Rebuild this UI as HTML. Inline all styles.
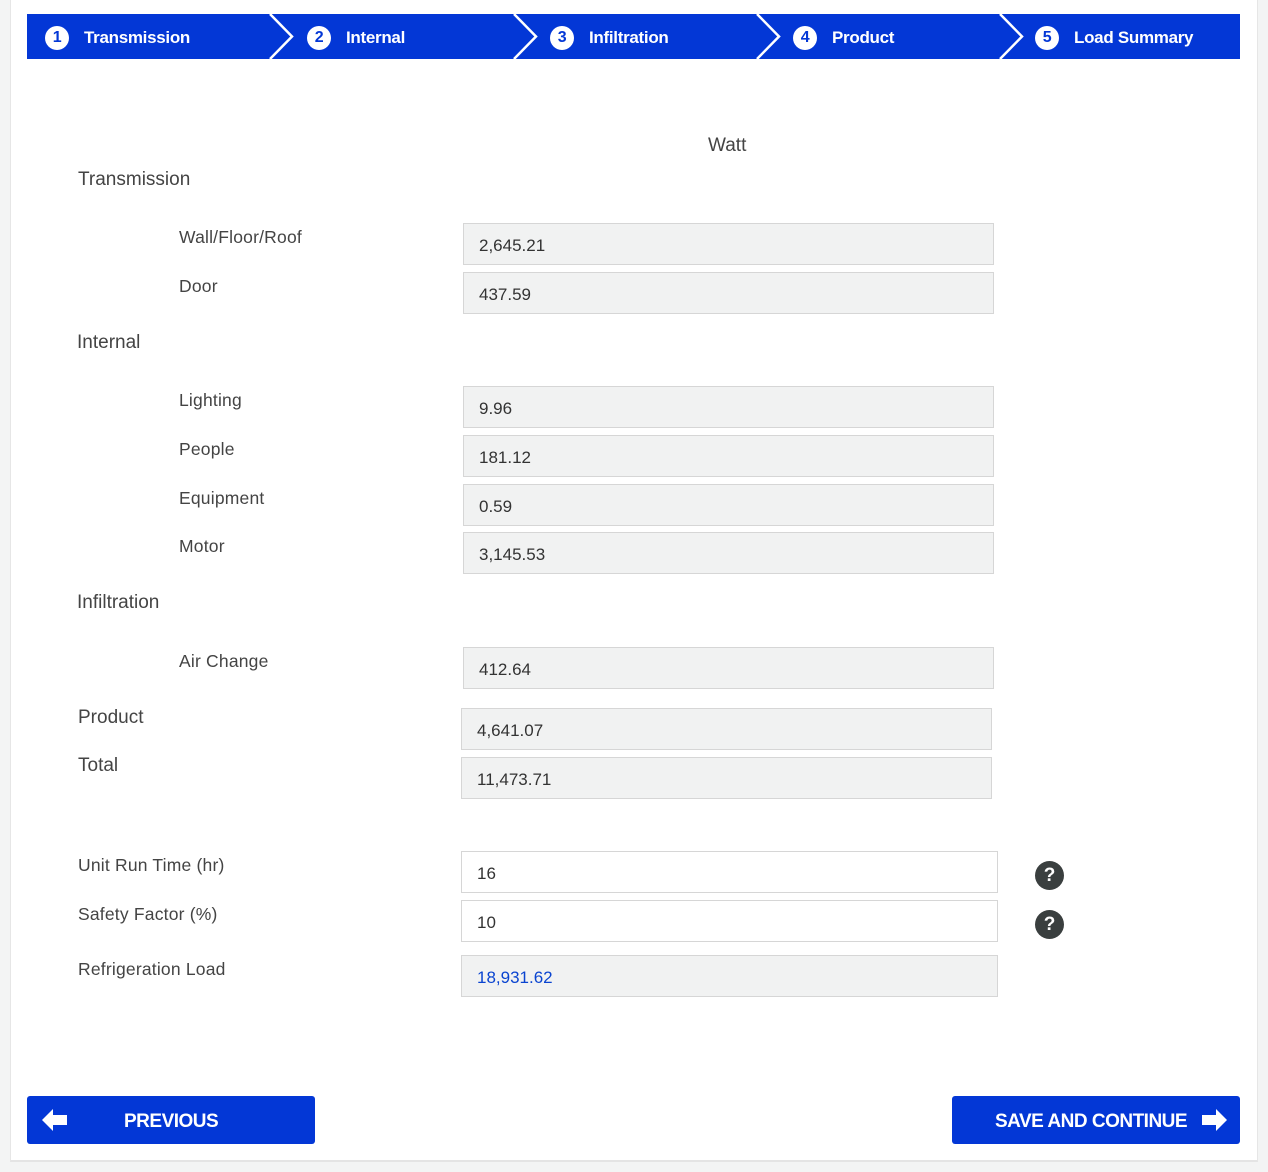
<!DOCTYPE html>
<html><head><style>
*{margin:0;padding:0;box-sizing:border-box}
body{width:1268px;height:1172px;background:#f3f4f4;font-family:"Liberation Sans",sans-serif;position:relative;overflow:hidden;color:#444}
.card{position:absolute;left:10px;top:0;width:1248px;height:1162px;background:#fff;border-left:1px solid #e6e6e6;border-right:1px solid #e6e6e6;border-bottom:2px solid #e4e4e4}
.bar{position:absolute;left:27px;top:14px;width:1213px;height:45px;background:#0337d6}
.step{position:absolute;top:15px;height:45px;line-height:45px;color:#fff;font-size:17px;font-weight:bold;letter-spacing:-0.3px}
.num{display:inline-block;width:24px;height:24px;border-radius:50%;background:#fff;color:#0337d6;text-align:center;line-height:24px;font-size:16px;margin-right:15px;vertical-align:1px}
.l{position:absolute;font-size:19px;color:#444}
.s{font-size:17.5px;letter-spacing:0.2px}
.f{position:absolute;height:42px;background:#f1f2f2;border:1px solid #d6d6d6;font-size:17px;line-height:44px;padding-left:15px;color:#333}
.w{background:#fff}
.q{position:absolute;width:29px;height:29px;border-radius:50%;background:#3a3f3f;color:#fff;font-weight:bold;text-align:center;line-height:29px;font-size:19px}
.btn{position:absolute;top:1096px;height:48px;background:#0337d6;border-radius:3px;color:#fff;font-weight:bold;font-size:19px;line-height:52px;letter-spacing:-0.5px}
</style></head><body>
<div class="card"></div>
<div class="bar"></div>
<svg style="position:absolute;left:0;top:14px" width="1268" height="45">
<g fill="none" stroke="#fff" stroke-width="2.5">
<polyline points="270,0 292,22.5 270,45"/>
<polyline points="514,0 536,22.5 514,45"/>
<polyline points="757,0 779,22.5 757,45"/>
<polyline points="1000,0 1022,22.5 1000,45"/>
</g></svg>
<div class="step" style="left:45px"><span class="num">1</span>Transmission</div>
<div class="step" style="left:307px"><span class="num">2</span>Internal</div>
<div class="step" style="left:550px"><span class="num">3</span>Infiltration</div>
<div class="step" style="left:793px"><span class="num">4</span>Product</div>
<div class="step" style="left:1035px"><span class="num">5</span>Load Summary</div>

<div class="l" style="left:708px;top:135px">Watt</div>
<div class="l" style="left:78px;top:169px">Transmission</div>
<div class="l s" style="left:179px;top:227px">Wall/Floor/Roof</div>
<div class="l s" style="left:179px;top:276px">Door</div>
<div class="l" style="left:77px;top:332px">Internal</div>
<div class="l s" style="left:179px;top:390px">Lighting</div>
<div class="l s" style="left:179px;top:439px">People</div>
<div class="l s" style="left:179px;top:488px">Equipment</div>
<div class="l s" style="left:179px;top:536px">Motor</div>
<div class="l" style="left:77px;top:592px">Infiltration</div>
<div class="l s" style="left:179px;top:651px">Air Change</div>
<div class="l" style="left:78px;top:707px">Product</div>
<div class="l" style="left:78px;top:755px">Total</div>
<div class="l s" style="left:78px;top:855px">Unit Run Time (hr)</div>
<div class="l s" style="left:78px;top:904px">Safety Factor (%)</div>
<div class="l s" style="left:78px;top:959px">Refrigeration Load</div>

<div class="f" style="left:463px;top:223px;width:531px">2,645.21</div>
<div class="f" style="left:463px;top:272px;width:531px">437.59</div>
<div class="f" style="left:463px;top:386px;width:531px">9.96</div>
<div class="f" style="left:463px;top:435px;width:531px">181.12</div>
<div class="f" style="left:463px;top:484px;width:531px">0.59</div>
<div class="f" style="left:463px;top:532px;width:531px">3,145.53</div>
<div class="f" style="left:463px;top:647px;width:531px">412.64</div>
<div class="f" style="left:461px;top:708px;width:531px">4,641.07</div>
<div class="f" style="left:461px;top:757px;width:531px">11,473.71</div>
<div class="f w" style="left:461px;top:851px;width:537px">16</div>
<div class="f w" style="left:461px;top:900px;width:537px">10</div>
<div class="f" style="left:461px;top:955px;width:537px;color:#0a44d0">18,931.62</div>
<div class="q" style="left:1035px;top:861px">?</div>
<div class="q" style="left:1035px;top:910px">?</div>

<div class="btn" style="left:27px;width:288px">
<svg style="position:absolute;left:15px;top:13px" width="26" height="22"><polygon points="0,11 11,0 11,6 25,6 25,16 11,16 11,22" fill="#fff"/></svg>
<span style="position:absolute;left:97px">PREVIOUS</span></div>
<div class="btn" style="left:952px;width:288px">
<span style="position:absolute;left:43px">SAVE AND CONTINUE</span>
<svg style="position:absolute;left:250px;top:13px" width="26" height="22"><polygon points="25,11 14,0 14,6 0,6 0,16 14,16 14,22" fill="#fff"/></svg></div>
</body></html>
